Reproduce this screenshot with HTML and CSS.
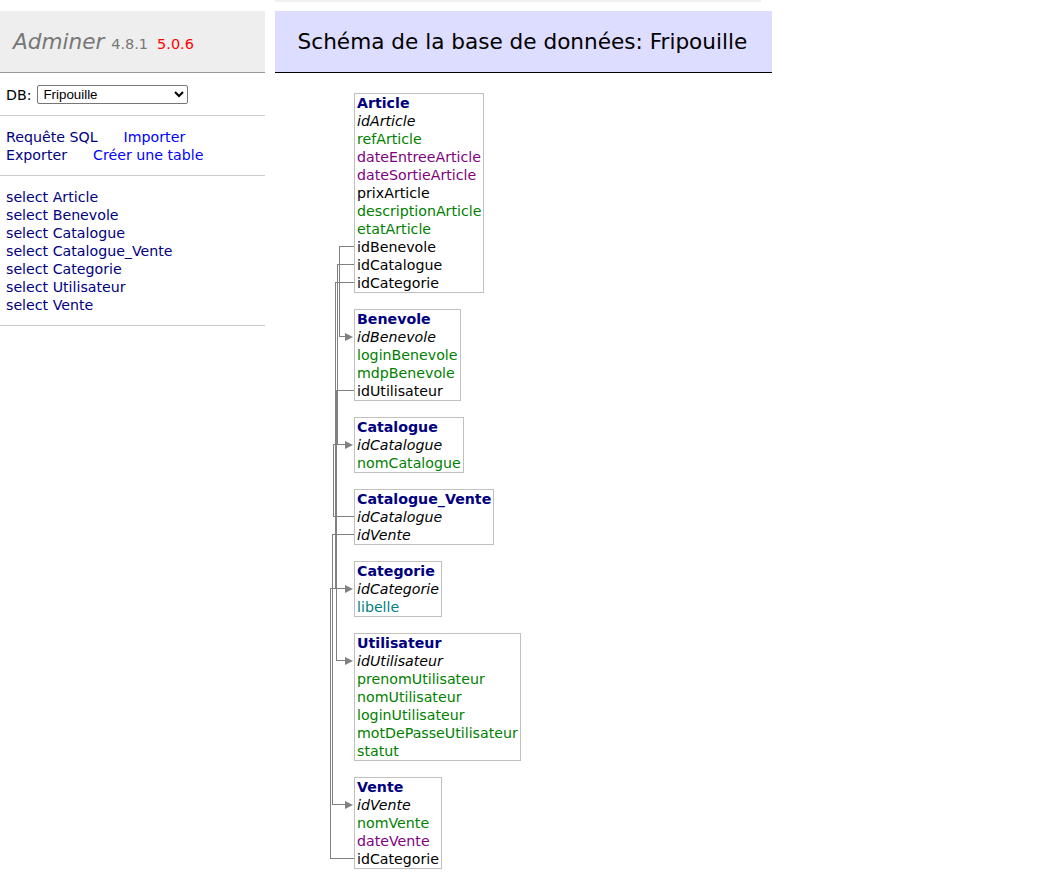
FILE: index.html
```html
<!DOCTYPE html>
<html lang="fr">
<head>
<meta charset="utf-8">
<title>Schéma de la base de données: Fripouille - Adminer</title>
<link rel="stylesheet" href="styles.css">
</head>
<body>
<div class="page">
  <div class="menu">
    <h1 class="logo"><a class="h1link" href="#">Adminer</a> <span class="version">4.8.1</span><a class="version new" href="#">5.0.6</a></h1>
    <div class="sect dbsel">DB: <select class="db"><option>Fripouille</option></select></div>
    <div class="sect links">
      <a class="vis" href="#">Requête SQL</a><a class="new-link" href="#">Importer</a><br>
      <a class="vis" href="#">Exporter</a><a class="new-link" href="#">Créer une table</a>
    </div>
    <ul class="sect tables">
      <li><a class="vis" href="#">select Article</a></li>
      <li><a class="vis" href="#">select Benevole</a></li>
      <li><a class="vis" href="#">select Catalogue</a></li>
      <li><a class="vis" href="#">select Catalogue_Vente</a></li>
      <li><a class="vis" href="#">select Categorie</a></li>
      <li><a class="vis" href="#">select Utilisateur</a></li>
      <li><a class="vis" href="#">select Vente</a></li>
    </ul>
  </div>
  <div class="content">
    <div class="crumb"></div>
    <h2 class="title">Schéma de la base de données: Fripouille</h2>
    <div class="schema">
      <svg class="refs" width="120" height="820" viewBox="275 73 120 820">
        <g fill="none" stroke="#808080" stroke-width="1" shape-rendering="crispEdges">
          <path d="M354 246.5H339.5V336.5H346"/>
          <path d="M354 264.5H337.5V444.5H346"/>
          <path d="M354 282.5H335.5V588.5H346"/>
          <path d="M354 390.5H336.5V660.5H346"/>
          <path d="M354 516.5H333.5V444.5H346"/>
          <path d="M354 534.5H332.5V804.5H346"/>
          <path d="M354 858.5H330.5V588.5H346"/>
        </g>
        <g fill="#808080">
          <polygon points="345,333 353,337 345,341"/>
          <polygon points="345,441 353,445 345,449"/>
          <polygon points="345,585 353,589 345,593"/>
          <polygon points="345,657 353,661 345,665"/>
          <polygon points="345,801 353,805 345,809"/>
        </g>
      </svg>
      <div class="table t-article">
        <a class="tname" href="#">Article</a>
        <span class="pk">idArticle</span>
        <span class="char">refArticle</span>
        <span class="date">dateEntreeArticle</span>
        <span class="date">dateSortieArticle</span>
        <span>prixArticle</span>
        <span class="char">descriptionArticle</span>
        <span class="char">etatArticle</span>
        <span>idBenevole</span>
        <span>idCatalogue</span>
        <span>idCategorie</span>
      </div>
      <div class="table t-benevole">
        <a class="tname" href="#">Benevole</a>
        <span class="pk">idBenevole</span>
        <span class="char">loginBenevole</span>
        <span class="char">mdpBenevole</span>
        <span>idUtilisateur</span>
      </div>
      <div class="table t-catalogue">
        <a class="tname" href="#">Catalogue</a>
        <span class="pk">idCatalogue</span>
        <span class="char">nomCatalogue</span>
      </div>
      <div class="table t-catvente">
        <a class="tname" href="#">Catalogue_Vente</a>
        <span class="pk">idCatalogue</span>
        <span class="pk">idVente</span>
      </div>
      <div class="table t-categorie">
        <a class="tname" href="#">Categorie</a>
        <span class="pk">idCategorie</span>
        <span class="enum">libelle</span>
      </div>
      <div class="table t-utilisateur">
        <a class="tname" href="#">Utilisateur</a>
        <span class="pk">idUtilisateur</span>
        <span class="char">prenomUtilisateur</span>
        <span class="char">nomUtilisateur</span>
        <span class="char">loginUtilisateur</span>
        <span class="char">motDePasseUtilisateur</span>
        <span class="char">statut</span>
      </div>
      <div class="table t-vente">
        <a class="tname" href="#">Vente</a>
        <span class="pk">idVente</span>
        <span class="char">nomVente</span>
        <span class="date">dateVente</span>
        <span>idCategorie</span>
      </div>
    </div>
  </div>
</div>
</body>
</html>
```
FILE: styles.css
```css
html, body {
  margin: 0;
  padding: 0;
  background: #fff;
}
body {
  font-family: "DejaVu Sans", Verdana, sans-serif;
  font-size: 14.2px;
  line-height: 18px;
  color: #000;
}
a {
  text-decoration: none;
}
.page {
  display: flex;
  align-items: flex-start;
}
.menu {
  width: 265px;
  flex: none;
  padding-top: 11px;
}
.logo {
  margin: 0;
  font-size: 21.6px;
  line-height: 27px;
  height: 27px;
  font-weight: normal;
  padding: 17.3px 12px 17.2px 13px;
  background: #eee;
  border-bottom: 1px solid #999;
  color: #777;
  white-space: nowrap;
}
.h1link {
  color: #777;
  font-style: italic;
}
.version {
  color: #777;
  font-size: 67%;
  line-height: 1;
}
.version.new {
  color: red;
  margin-left: 9px;
}
.sect {
  margin: 0;
  padding: 11.5px 6px;
  border-bottom: 1px solid #ccc;
}
.dbsel {
  height: 18px;
  padding-top: 12.5px;
  display: flex;
  align-items: center;
  gap: 5px;
}
.db {
  width: 151px;
  height: 19px;
  font-family: "Liberation Sans", Arial, sans-serif;
  font-size: 13.33px;
  padding: 0 0 0 1px;
  margin: 0 0 0 1px;
  border: 1px solid #767676;
  border-radius: 2px;
  background: #fff;
  color: #000;
}
.links a {
  margin-right: 20px;
}
.links a + a {
  margin-left: 6px;
}
.vis {
  color: #000080;
}
.new-link {
  color: #0000ff;
}
.tables {
  list-style: none;
}
.content {
  margin-left: 10px;
  width: 497px;
  flex: none;
}
.crumb {
  width: 486px;
  height: 2px;
  background: #f0f0f0;
  margin-bottom: 9px;
}
.title {
  margin: 0;
  font-size: 21.6px;
  line-height: 27px;
  font-weight: normal;
  padding: 17.3px 21.6px 17.2px 22.6px;
  background: #ddf;
  border-bottom: 1px solid #000;
  color: #000;
  white-space: nowrap;
}
.schema {
  position: relative;
  height: 822px;
}
.refs {
  position: absolute;
  left: 0;
  top: 0;
}
.table {
  position: absolute;
  left: 79px;
  border: 1px solid silver;
  padding: 0 2px;
  display: flex;
  flex-direction: column;
  white-space: nowrap;
  background: transparent;
}
.tname {
  color: #000080;
  font-weight: bold;
}
.pk {
  font-style: italic;
}
.char {
  color: #007f00;
}
.date {
  color: #7f007f;
}
.enum {
  color: #007f7f;
}
.t-article { top: 20px; }
.t-benevole { top: 236px; }
.t-catalogue { top: 344px; }
.t-catvente { top: 416px; }
.t-categorie { top: 488px; }
.t-utilisateur { top: 560px; }
.t-vente { top: 704px; }
```
